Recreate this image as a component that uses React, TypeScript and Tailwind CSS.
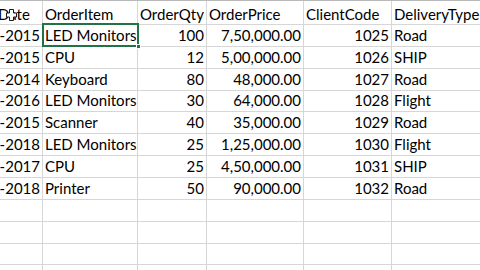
import React from 'react';

type Row = { date: string; item: string; qty: string; price: string; code: string; type: string };

const rows: Row[] = [
    { date: '12-04-2015', item: 'LED Monitors', qty: '100', price: '7,50,000.00', code: '1025', type: 'Road' },
    { date: '18-06-2015', item: 'CPU', qty: '12', price: '5,00,000.00', code: '1026', type: 'SHIP' },
    { date: '21-07-2014', item: 'Keyboard', qty: '80', price: '48,000.00', code: '1027', type: 'Road' },
    { date: '11-03-2016', item: 'LED Monitors', qty: '30', price: '64,000.00', code: '1028', type: 'Flight' },
    { date: '14-09-2015', item: 'Scanner', qty: '40', price: '35,000.00', code: '1029', type: 'Road' },
    { date: '17-02-2018', item: 'LED Monitors', qty: '25', price: '1,25,000.00', code: '1030', type: 'Flight' },
    { date: '15-08-2017', item: 'CPU', qty: '25', price: '4,50,000.00', code: '1031', type: 'SHIP' },
    { date: '19-01-2018', item: 'Printer', qty: '50', price: '90,000.00', code: '1032', type: 'Road' },
];

const widths = ['w-[43px]', 'w-[95px]', 'w-[69px]', 'w-[97px]', 'w-[88px]', 'w-[100px]'];

const Cell: React.FC<{ w: string; right?: boolean; header?: boolean; children?: React.ReactNode }> = ({ w, right, header, children }) => (
    <div
        className={`${w} shrink-0 flex items-end overflow-hidden whitespace-nowrap border-r border-b border-[#d6d6d6] ${
            right ? 'justify-end pr-[2px]' : 'justify-start pl-[2px]'
        } ${header ? 'h-[24px] pb-[1px]' : 'h-[21.86px] pb-[2px]'}`}
    >
        {children}
    </div>
);

const CrossCursor = () => (
    <svg width="11" height="12" viewBox="0 0 11 12" className="absolute left-[6px] top-[9px]">
        <path d="M3.5 0.5 H7.5 V4 H10.5 V8 H7.5 V11.5 H3.5 V8 H0.5 V4 H3.5 Z" fill="#ffffff" stroke="#1a1a1a" strokeWidth="1" />
    </svg>
);

export default function App() {
    return (
        <div
            className="relative w-[480px] h-[270px] overflow-hidden bg-white text-black text-[15px] leading-[18px]"
            style={{ fontFamily: 'Lato, "Open Sans", sans-serif' }}
        >
            <div className="flex border-t border-[#b8b8b8]">
                <Cell w={widths[0]} header>
                    <span className="-ml-[4px]">Date</span>
                </Cell>
                <Cell w={widths[1]} header>OrderItem</Cell>
                <Cell w={widths[2]} header>OrderQty</Cell>
                <Cell w={widths[3]} header>OrderPrice</Cell>
                <Cell w={widths[4]} header>ClientCode</Cell>
                <Cell w={widths[5]} header>DeliveryType</Cell>
            </div>
            {rows.map((r, i) => (
                <div key={i} className="flex">
                    <Cell w={widths[0]} right>{r.date}</Cell>
                    <Cell w={widths[1]}>{r.item}</Cell>
                    <Cell w={widths[2]} right>{r.qty}</Cell>
                    <Cell w={widths[3]} right>{r.price}</Cell>
                    <Cell w={widths[4]} right>{r.code}</Cell>
                    <Cell w={widths[5]}>{r.type}</Cell>
                </div>
            ))}
            {[0, 1, 2, 3].map((i) => (
                <div key={'e' + i} className="flex">
                    {widths.map((w, j) => (
                        <Cell key={j} w={w} />
                    ))}
                </div>
            ))}

            {/* active cell */}
            <div className="absolute left-[42px] top-[23px] w-[97px] h-[24px] border-2 border-[#217346]" />
            <div className="absolute left-[136px] top-[44px] w-[5px] h-[5px] bg-[#217346] border border-white" />

            <CrossCursor />
        </div>
    );
}
